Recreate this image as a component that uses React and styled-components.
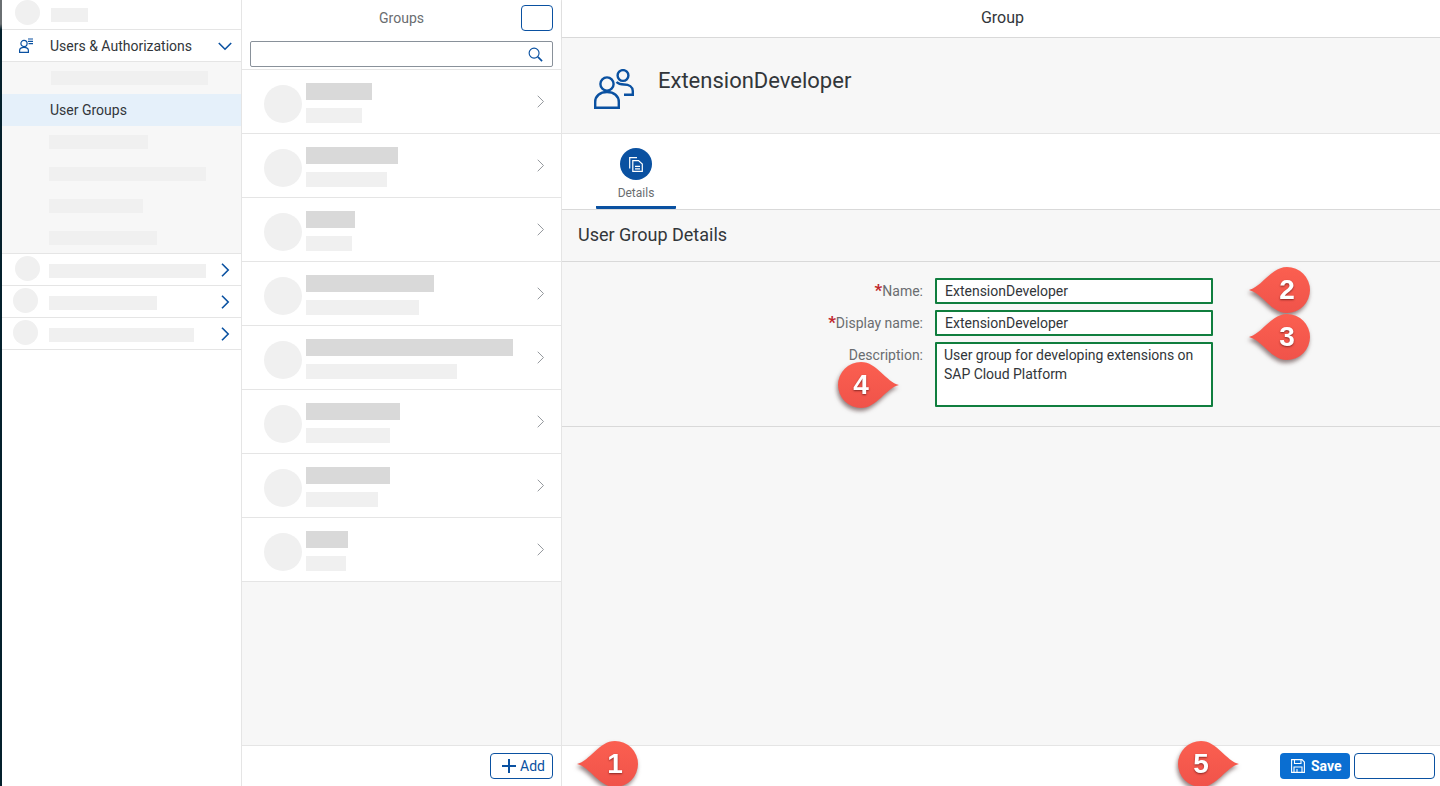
import React from "react";
import styled, { createGlobalStyle } from "styled-components";

const blue = "#0a51a1";
const text = "#32363a";
const line = "#e5e5e5";

const navBars = [157, 99, 157, 94, 108];
const navBottom = [
  { inset: 13, left: 9, width: 157 },
  { inset: 11, left: 11, width: 108 },
  { inset: 11, left: 11, width: 145 },
];
const groups = [
  [66, 56],
  [92, 81],
  [49, 46],
  [128, 113],
  [207, 151],
  [94, 84],
  [84, 72],
  [42, 40],
];

const UserListIcon = () => (
  <svg width="15" height="15" viewBox="0 0 15 15" fill="none" stroke={blue} strokeWidth="1.2">
    <circle cx="5" cy="5.500" r="3.100" />
    <path d="M.6 14.400V12.500C.6 10.500 2.200 9.400 5 9.400S9.400 10.500 9.400 12.500V14.400Z" />
    <path d="M9 1H14M9 3.300H14M9.500 5.700H14" />
  </svg>
);

const GroupIcon = () => (
  <GroupSvg width="40" height="40" viewBox="0 0 40 40" fill="none" stroke={blue} strokeWidth="2.4">
    <circle cx="13" cy="15" r="6.600" />
    <path d="M1.200 38.800V33C1.200 27 6 23 13 23S24.800 27 24.800 33V38.800Z" />
    <circle cx="29" cy="6.500" r="5.400" />
    <path d="M22.500 13C24.500 15 27 15.500 30 15.500C35 15.500 38.800 18 38.800 22V25.800H30" />
  </GroupSvg>
);

const DocsIcon = () => (
  <svg width="14" height="15" viewBox="0 0 14 15" fill="none" stroke="#fff" strokeWidth="1.200">
    <path d="M8 .7H.7V11.500" />
    <path d="M3.800 3.600H9.500L13.300 7V14.400H3.800Z" />
    <path d="M6 9.300H11M6 11.800H11" />
  </svg>
);

const SearchIcon = () => (
  <svg width="15" height="15" viewBox="0 0 16 16" fill="none" stroke={blue}>
    <circle cx="6.500" cy="6.500" r="5.300" strokeWidth="1.200" />
    <path d="M10.500 10.500L15 15" strokeWidth="1.800" />
  </svg>
);

const SaveIcon = () => (
  <svg width="14" height="14" viewBox="0 0 14 14" fill="none" stroke="#fff" strokeWidth="1.100">
    <path d="M.6.600H11L13.400 3V13.400H.6Z" />
    <path d="M3.500.8V4.500H10V.8M3 13.200V8H11V13.200M6 10V13" />
  </svg>
);

const Chevron = ({ color, dir = "right", size = 14, weight = 1.6 }) => (
  <svg width={size} height={size} viewBox="0 0 14 14" fill="none" stroke={color} strokeWidth={weight}>
    <path d={dir === "right" ? "M4 .8L10.200 7L4 13.200" : "M.8 4L7 10.200L13.200 4"} />
  </svg>
);

const Callout = ({ n, x, y, flip }) => (
  <CalloutBox style={{ left: x, top: y }}>
    <svg width="66" height="48" viewBox="0 0 66 48" style={{ transform: flip ? "scaleX(-1)" : "none" }}>
      <defs>
        <linearGradient id={`drop${n}`} x1="0" y1="0" x2="0" y2="1">
          <stop offset="0" stopColor="#fb5f50" />
          <stop offset="1" stopColor="#f0534a" />
        </linearGradient>
      </defs>
      <path
        d="M3 24C16 21 25 1 41 1A23 23 0 1 1 41 47C25 47 16 27 3 24Z"
        fill={`url(#drop${n})`}
      />
    </svg>
    <CalloutNumber $flip={flip}>{n}</CalloutNumber>
  </CalloutBox>
);

const App = () => (
  <Page>
    <GlobalStyle />
    <Strip />
    <Sidebar>
      <NavRow $inset={13}>
        <NavCircle $lift={4} />
        <NavBar $width={37} $left={11} />
      </NavRow>
      <NavRow>
        <NavIcon>
          <UserListIcon />
        </NavIcon>
        <NavLabel>Users &amp; Authorizations</NavLabel>
        <NavChevron>
          <Chevron color={blue} dir="down" />
        </NavChevron>
      </NavRow>
      <SubNav>
        <SubRow $inset={49}>
          <NavBar $width={157} />
        </SubRow>
        <SubRow $active $inset={48}>
          <NavLabel>User Groups</NavLabel>
        </SubRow>
        {navBars.slice(1).map((w, i) => (
          <SubRow key={i} $inset={47}>
            <NavBar $width={w} />
          </SubRow>
        ))}
      </SubNav>
      {navBottom.map((row, i) => (
        <NavRow key={i} $inset={row.inset}>
          <NavCircle $lift={3} />
          <NavBar $width={row.width} $left={row.left} $drop={3} />
          <NavChevron>
            <Chevron color={blue} />
          </NavChevron>
        </NavRow>
      ))}
    </Sidebar>

    <Master>
      <MasterHead>
        <MasterTitle>Groups</MasterTitle>
        <GhostButton $width={32} />
      </MasterHead>
      <SearchRow>
        <SearchField>
          <SearchIcon />
        </SearchField>
      </SearchRow>
      <GroupList>
        {groups.map(([a, b], i) => (
          <GroupItem key={i}>
            <GroupAvatar />
            <GroupText>
              <GroupName $width={a} />
              <GroupSub $width={b} />
            </GroupText>
            <ItemChevron>
              <Chevron color="#8a8f94" size={13} weight={1} />
            </ItemChevron>
          </GroupItem>
        ))}
      </GroupList>
      <Footer $right={8}>
        <AddButton>
          <svg width="16" height="16" viewBox="0 0 16 16" stroke={blue} strokeWidth="2" fill="none">
            <path d="M8 1V15M1 8H15" />
          </svg>
          Add
        </AddButton>
      </Footer>
    </Master>

    <Detail>
      <DetailHead>Group</DetailHead>
      <ObjectHeader>
        <GroupIcon />
        <ObjectTitle>ExtensionDeveloper</ObjectTitle>
      </ObjectHeader>
      <TabBar>
        <Tab>
          <TabCircle>
            <DocsIcon />
          </TabCircle>
          <TabLabel>Details</TabLabel>
        </Tab>
      </TabBar>
      <Content>
        <SectionTitle>User Group Details</SectionTitle>
        <Form>
          <FieldLabel>
            <Star>*</Star>Name:
          </FieldLabel>
          <Field>ExtensionDeveloper</Field>
          <FieldLabel>
            <Star>*</Star>Display name:
          </FieldLabel>
          <Field>ExtensionDeveloper</Field>
          <FieldLabel>Description:</FieldLabel>
          <AreaField>User group for developing extensions on SAP Cloud Platform</AreaField>
        </Form>
      </Content>
      <Footer $right={5}>
        <SaveButton>
          <SaveIcon />
          Save
        </SaveButton>
        <GhostButton $width={81} />
      </Footer>
    </Detail>

    <Callout n={1} x={574} y={740} />
    <Callout n={2} x={1246} y={266} />
    <Callout n={3} x={1246} y={313} />
    <Callout n={4} x={836} y={361} flip />
    <Callout n={5} x={1176} y={740} flip />
  </Page>
);

export default App;

const GlobalStyle = createGlobalStyle`
  * {
    box-sizing: border-box;
  }
  body {
    margin: 0;
    background: #fff;
    font-family: Roboto, "Liberation Sans", sans-serif;
    color: ${text};
  }
`;

const Page = styled.div`
  position: relative;
  display: flex;
  width: 1440px;
  height: 786px;
  overflow: hidden;
`;

const Strip = styled.div`
  width: 2px;
  flex: none;
  background: linear-gradient(#6a6f72 0, #6a6f72 24px, #04202c 30px, #04202c 100%);
`;

const Sidebar = styled.nav`
  width: 240px;
  flex: none;
  background: #fff;
  border-right: 1px solid ${line};
`;

const NavRow = styled.div`
  display: flex;
  align-items: center;
  height: 32px;
  padding-left: ${(p) => p.$inset || 0}px;
  border-bottom: 1px solid ${line};

  &:first-child {
    height: 30px;
  }
`;

const NavCircle = styled.span`
  width: 25px;
  height: 25px;
  flex: none;
  border-radius: 50%;
  background: #f0f0f0;
  margin-bottom: ${(p) => p.$lift}px;
`;

const NavBar = styled.span`
  display: block;
  width: ${(p) => p.$width}px;
  height: 14px;
  background: #f0f0f0;
  margin-left: ${(p) => p.$left || 0}px;
  margin-top: ${(p) => p.$drop || 0}px;
`;

const NavIcon = styled.span`
  display: flex;
  width: 48px;
  padding-left: 17px;
`;

const NavLabel = styled.span`
  font-size: 14px;
  color: ${text};
`;

const NavChevron = styled.span`
  display: flex;
  margin-left: auto;
  padding-right: 9px;
`;

const SubNav = styled.div`
  height: 192px;
  background: #f7f7f7;
  border-bottom: 1px solid ${line};
`;

const SubRow = styled.div`
  display: flex;
  align-items: center;
  height: 32px;
  padding-left: ${(p) => p.$inset}px;
  background: ${(p) => (p.$active ? "#e5f0fa" : "transparent")};
`;

const Master = styled.section`
  display: flex;
  flex-direction: column;
  width: 320px;
  flex: none;
  background: #f7f7f7;
  border-right: 1px solid ${line};
`;

const MasterHead = styled.header`
  position: relative;
  display: flex;
  align-items: center;
  justify-content: flex-end;
  height: 41px;
  padding: 0 8px 5px 0;
  background: #fff;
`;

const MasterTitle = styled.h2`
  position: absolute;
  left: 0;
  right: 0;
  top: 10px;
  margin: 0;
  text-align: center;
  font-size: 14px;
  line-height: 16px;
  font-weight: 400;
  color: #6a6d70;
`;

const GhostButton = styled.button`
  width: ${(p) => p.$width}px;
  height: 26px;
  padding: 0;
  background: #fff;
  border: 1px solid ${blue};
  border-radius: 4px;
`;

const SearchRow = styled.div`
  height: 29px;
  padding: 0 8px;
  background: #fff;
  border-bottom: 1px solid ${line};
`;

const SearchField = styled.div`
  display: flex;
  align-items: center;
  justify-content: flex-end;
  height: 26px;
  padding-right: 9px;
  border: 1px solid #89919a;
  border-radius: 2px;
`;

const GroupList = styled.div`
  flex: 1;
`;

const GroupItem = styled.div`
  display: flex;
  height: 64px;
  padding: 13px 14px 0 22px;
  background: #fff;
  border-bottom: 1px solid ${line};
`;

const GroupAvatar = styled.span`
  width: 38px;
  height: 38px;
  flex: none;
  margin-top: 2px;
  border-radius: 50%;
  background: #f0f0f0;
`;

const GroupText = styled.div`
  display: flex;
  flex-direction: column;
  gap: 8px;
  margin-left: 4px;
`;

const GroupName = styled.span`
  width: ${(p) => p.$width}px;
  height: 17px;
  background: #d9d9d9;
`;

const GroupSub = styled.span`
  width: ${(p) => p.$width}px;
  height: 15px;
  background: #f0f0f0;
`;

const ItemChevron = styled.span`
  display: flex;
  margin-left: auto;
  margin-top: 12px;
  height: 13px;
`;

const Footer = styled.footer`
  display: flex;
  align-items: center;
  justify-content: flex-end;
  gap: 4px;
  height: 41px;
  flex: none;
  padding: 0 ${(p) => p.$right}px 1px 8px;
  background: #fff;
  border-top: 1px solid ${line};
`;

const AddButton = styled.button`
  display: flex;
  align-items: center;
  gap: 3px;
  width: 63px;
  height: 26px;
  padding: 0 0 0 10px;
  background: #fff;
  border: 1px solid ${blue};
  border-radius: 4px;
  font: 400 14px Roboto, sans-serif;
  color: ${blue};
`;

const Detail = styled.main`
  position: relative;
  display: flex;
  flex-direction: column;
  flex: 1;
  min-width: 0;
`;

const DetailHead = styled.header`
  display: flex;
  align-items: center;
  justify-content: center;
  height: 38px;
  flex: none;
  padding: 0 0 2px 3px;
  font-size: 16px;
  color: ${text};
  background: #fff;
  border-bottom: 1px solid #d9d9d9;
  box-shadow: 0 1px 2px rgba(0, 0, 0, 0.08);
`;

const ObjectHeader = styled.div`
  display: flex;
  align-items: center;
  gap: 24px;
  height: 96px;
  flex: none;
  padding: 0 0 0 32px;
  background: #f7f7f7;
  border-bottom: 1px solid ${line};
`;

const GroupSvg = styled.svg`
  flex: none;
  margin-top: 7px;
`;

const ObjectTitle = styled.h1`
  margin: 0 0 11px;
  font-size: 22px;
  font-weight: 400;
  color: ${text};
`;

const TabBar = styled.div`
  display: flex;
  height: 76px;
  flex: none;
  padding-left: 34px;
  background: #fff;
  border-bottom: 1px solid #d9d9d9;
`;

const Tab = styled.div`
  display: flex;
  flex-direction: column;
  align-items: center;
  width: 80px;
  height: 75px;
  padding-top: 14px;
  border-bottom: 3px solid ${blue};
  border-radius: 0 0 1px 1px;
`;

const TabCircle = styled.span`
  display: flex;
  align-items: center;
  justify-content: center;
  width: 32px;
  height: 32px;
  border-radius: 50%;
  background: ${blue};
`;

const TabLabel = styled.span`
  margin-top: 6px;
  font-size: 12px;
  line-height: 15px;
  color: #6a6d70;
`;

const Content = styled.div`
  flex: 1;
  background: #f7f7f7;
`;

const SectionTitle = styled.h3`
  display: flex;
  align-items: center;
  height: 52px;
  margin: 0;
  padding: 0 0 2px 16px;
  font-size: 18px;
  font-weight: 400;
  color: ${text};
  border-bottom: 1px solid #d9d9d9;
`;

const Form = styled.div`
  display: grid;
  grid-template-columns: 361px 278px;
  grid-auto-rows: min-content;
  column-gap: 12px;
  row-gap: 6px;
  height: 165px;
  padding-top: 16px;
  border-bottom: 1px solid #d9d9d9;
`;

const FieldLabel = styled.label`
  justify-self: end;
  font-size: 14px;
  line-height: 26px;
  color: #6a6d70;
`;

const Star = styled.span`
  color: #c0272d;
  font-size: 17px;
  line-height: 1;
  font-weight: 700;
`;

const Field = styled.div`
  height: 26px;
  padding: 0 8px;
  background: #fff;
  border: 2px solid #107e3e;
  border-radius: 1px;
  font-size: 14px;
  line-height: 22px;
  color: ${text};
`;

const AreaField = styled(Field)`
  height: 65px;
  padding: 2px 7px;
  line-height: 19px;
  letter-spacing: -0.03px;
`;

const SaveButton = styled.button`
  display: flex;
  align-items: center;
  gap: 6px;
  width: 70px;
  height: 26px;
  padding: 0 0 0 11px;
  background: #0a6ed1;
  border: 0;
  border-radius: 4px;
  font: 700 14px Roboto, sans-serif;
  color: #fff;
`;

const CalloutBox = styled.div`
  position: absolute;
  width: 66px;
  height: 48px;
  filter: drop-shadow(-1px 3px 2px rgba(60, 30, 30, 0.55));
`;

const CalloutNumber = styled.span`
  position: absolute;
  top: 0;
  bottom: 0;
  ${(p) => (p.$flip ? "left: 3px;" : "right: 3px;")}
  width: 44px;
  text-align: center;
  font: 700 28px/48px "Liberation Sans", sans-serif;
  color: #fff;
  text-shadow: 0 1px 2px rgba(90, 20, 20, 0.7);
`;
